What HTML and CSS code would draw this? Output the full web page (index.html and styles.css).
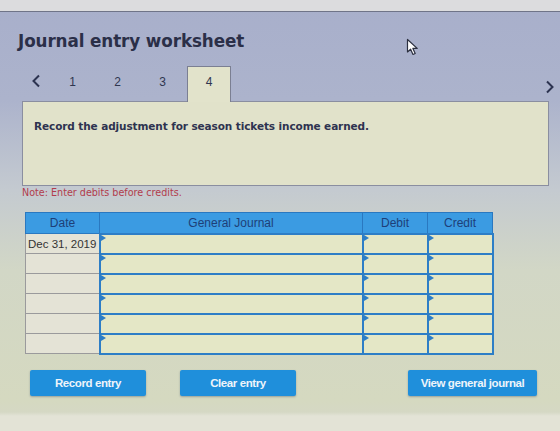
FILE: index.html
```html
<!DOCTYPE html>
<html>
<head>
<meta charset="utf-8">
<title>Journal entry worksheet</title>
<link rel="stylesheet" href="styles.css">
</head>
<body>
<div class="topstrip"></div>
<div class="page">
  <header class="head">
    <h1>Journal entry worksheet</h1>
    <svg class="pointer" width="14" height="18" viewBox="0 0 14 18">
      <path d="M1.5 1.5 L1.5 14 L4.6 11.2 L7 16.5 L9.2 15.5 L6.9 10.4 L11.2 10.4 Z" fill="#fff" stroke="#2c3040" stroke-width="1.2" stroke-linejoin="round"/>
    </svg>
    <nav class="tabs">
      <span class="arrow prev">
        <svg width="10" height="14" viewBox="0 0 10 14"><path d="M8 1.5 L2.5 7 L8 12.5" fill="none" stroke="#2c3350" stroke-width="2"/></svg>
      </span>
      <span class="tab">1</span>
      <span class="tab">2</span>
      <span class="tab">3</span>
      <span class="tab current">4</span>
      <span class="arrow next">
        <svg width="10" height="14" viewBox="0 0 10 14"><path d="M2 1.5 L7.5 7 L2 12.5" fill="none" stroke="#2c3350" stroke-width="2"/></svg>
      </span>
    </nav>
  </header>

  <div class="panel">
    <p>Record the adjustment for season tickets income earned.</p>
  </div>

  <p class="note">Note: Enter debits before credits.</p>

  <table class="journal">
    <thead>
      <tr>
        <th class="c-date">Date</th>
        <th class="c-acct">General Journal</th>
        <th class="c-amt">Debit</th>
        <th class="c-amt">Credit</th>
      </tr>
    </thead>
    <tbody>
      <tr><td class="date">Dec 31, 2019</td><td class="cell"></td><td class="cell"></td><td class="cell"></td></tr>
      <tr><td class="date"></td><td class="cell"></td><td class="cell"></td><td class="cell"></td></tr>
      <tr><td class="date"></td><td class="cell"></td><td class="cell"></td><td class="cell"></td></tr>
      <tr><td class="date"></td><td class="cell"></td><td class="cell"></td><td class="cell"></td></tr>
      <tr><td class="date"></td><td class="cell"></td><td class="cell"></td><td class="cell"></td></tr>
      <tr><td class="date"></td><td class="cell"></td><td class="cell"></td><td class="cell"></td></tr>
    </tbody>
  </table>

  <div class="actions">
    <button class="btn">Record entry</button>
    <button class="btn">Clear entry</button>
    <button class="btn wide">View general journal</button>
  </div>
</div>
</body>
</html>
```

FILE: styles.css
```css
body {
    margin: 0;
    width: 560px;
    height: 431px;
    overflow: hidden;
    font-family: "Liberation Sans", Arial, sans-serif;
    background: linear-gradient(#a8afcb 0px, #acb3cc 100px, #c4cad0 190px, #d2d7c6 270px, #d5d9c0 400px, #d5d8c4 412px, #e3e3d6 416px);
}
.topstrip {
    height: 11px;
    background: #dcdcde;
    border-bottom: 1px solid #6f7488;
}
.page {
    position: relative;
}
.head {
    padding-top: 18px;
}
h1 {
    margin: 0 0 14px 18px;
    font-family: "DejaVu Sans", Verdana, sans-serif;
    font-size: 16.8px;
    line-height: 22px;
    color: #2b2f48;
    letter-spacing: -0.1px;
}
.pointer {
    position: absolute;
    left: 406px;
    top: 26px;
}
.tabs {
    display: flex;
    height: 35px;
    padding-left: 22px;
}
.arrow {
    width: 28px;
    display: flex;
    justify-content: center;
    padding-top: 8px;
}
.arrow.next {
    margin-left: auto;
    width: 20px;
    padding-top: 14px;
}
.tab {
    width: 45px;
    text-align: center;
    font-size: 12px;
    line-height: 14px;
    padding-top: 9px;
    color: #2f3650;
}
.tab.current {
    margin-left: 2px;
    box-sizing: border-box;
    width: 44px;
    height: 36px;
    background: #e2e3cb;
    border: 1px solid #7b7f92;
    border-bottom: none;
    position: relative;
    z-index: 1;
    padding-top: 8px;
}
.panel {
    margin: 0 11px 0 22px;
    height: 85px;
    box-sizing: border-box;
    background: #e1e2ca;
    border: 1px solid #8a8ea0;
    padding: 18px 11px 0;
}
.panel p {
    margin: 0;
    font-family: "DejaVu Sans", Verdana, sans-serif;
    font-weight: bold;
    font-size: 10.5px;
    color: #2e3350;
    letter-spacing: -0.1px;
}
.note {
    margin: 1px 0 0 22px;
    font-family: "DejaVu Sans", Verdana, sans-serif;
    font-size: 9.6px;
    line-height: 12px;
    color: #b23c4c;
}
.journal {
    margin: 13px 0 0 25px;
    width: 467px;
    border-collapse: collapse;
    table-layout: fixed;
}
.journal th {
    height: 21px;
    padding: 0;
    background: #3b9be2;
    color: #1e3f78;
    font-weight: normal;
    font-size: 12px;
    border: 1px solid #2a78c0;
    vertical-align: top;
    padding-top: 3px;
    box-sizing: border-box;
}
.c-date { width: 74px; }
.c-acct { width: 263px; }
.c-amt { width: 65px; }
.journal td {
    height: 20px;
    padding: 0;
    box-sizing: border-box;
}
.journal td.date {
    background: #e4e3d6;
    border: 1px solid #9a9a9c;
    font-size: 11.5px;
    color: #333;
    padding-left: 2px;
    white-space: nowrap;
    overflow: hidden;
}
.journal td.cell {
    position: relative;
    background: #e4e7c6;
    border: 2px solid #2d7ec6;
}
/* small dropdown marker in the top-left corner of each input cell */
.journal td.cell::before {
    content: "";
    position: absolute;
    left: 0;
    top: 0;
    border-top: 3px solid transparent;
    border-bottom: 3px solid transparent;
    border-left: 5px solid #2d7ec6;
}
.actions {
    display: flex;
    gap: 34px;
    margin-top: 15px;
    padding: 0 23px 0 30px;
}
.btn {
    width: 116px;
    height: 26px;
    border: none;
    border-radius: 2px;
    background: #1f8fdb;
    color: #eef4fa;
    font-family: "Liberation Sans", Arial, sans-serif;
    font-weight: bold;
    font-size: 11.5px;
    letter-spacing: -0.4px;
    box-shadow: 0 1px 2px rgba(40, 60, 90, 0.35);
}
.btn.wide {
    width: 129px;
    margin-left: auto;
}
```
